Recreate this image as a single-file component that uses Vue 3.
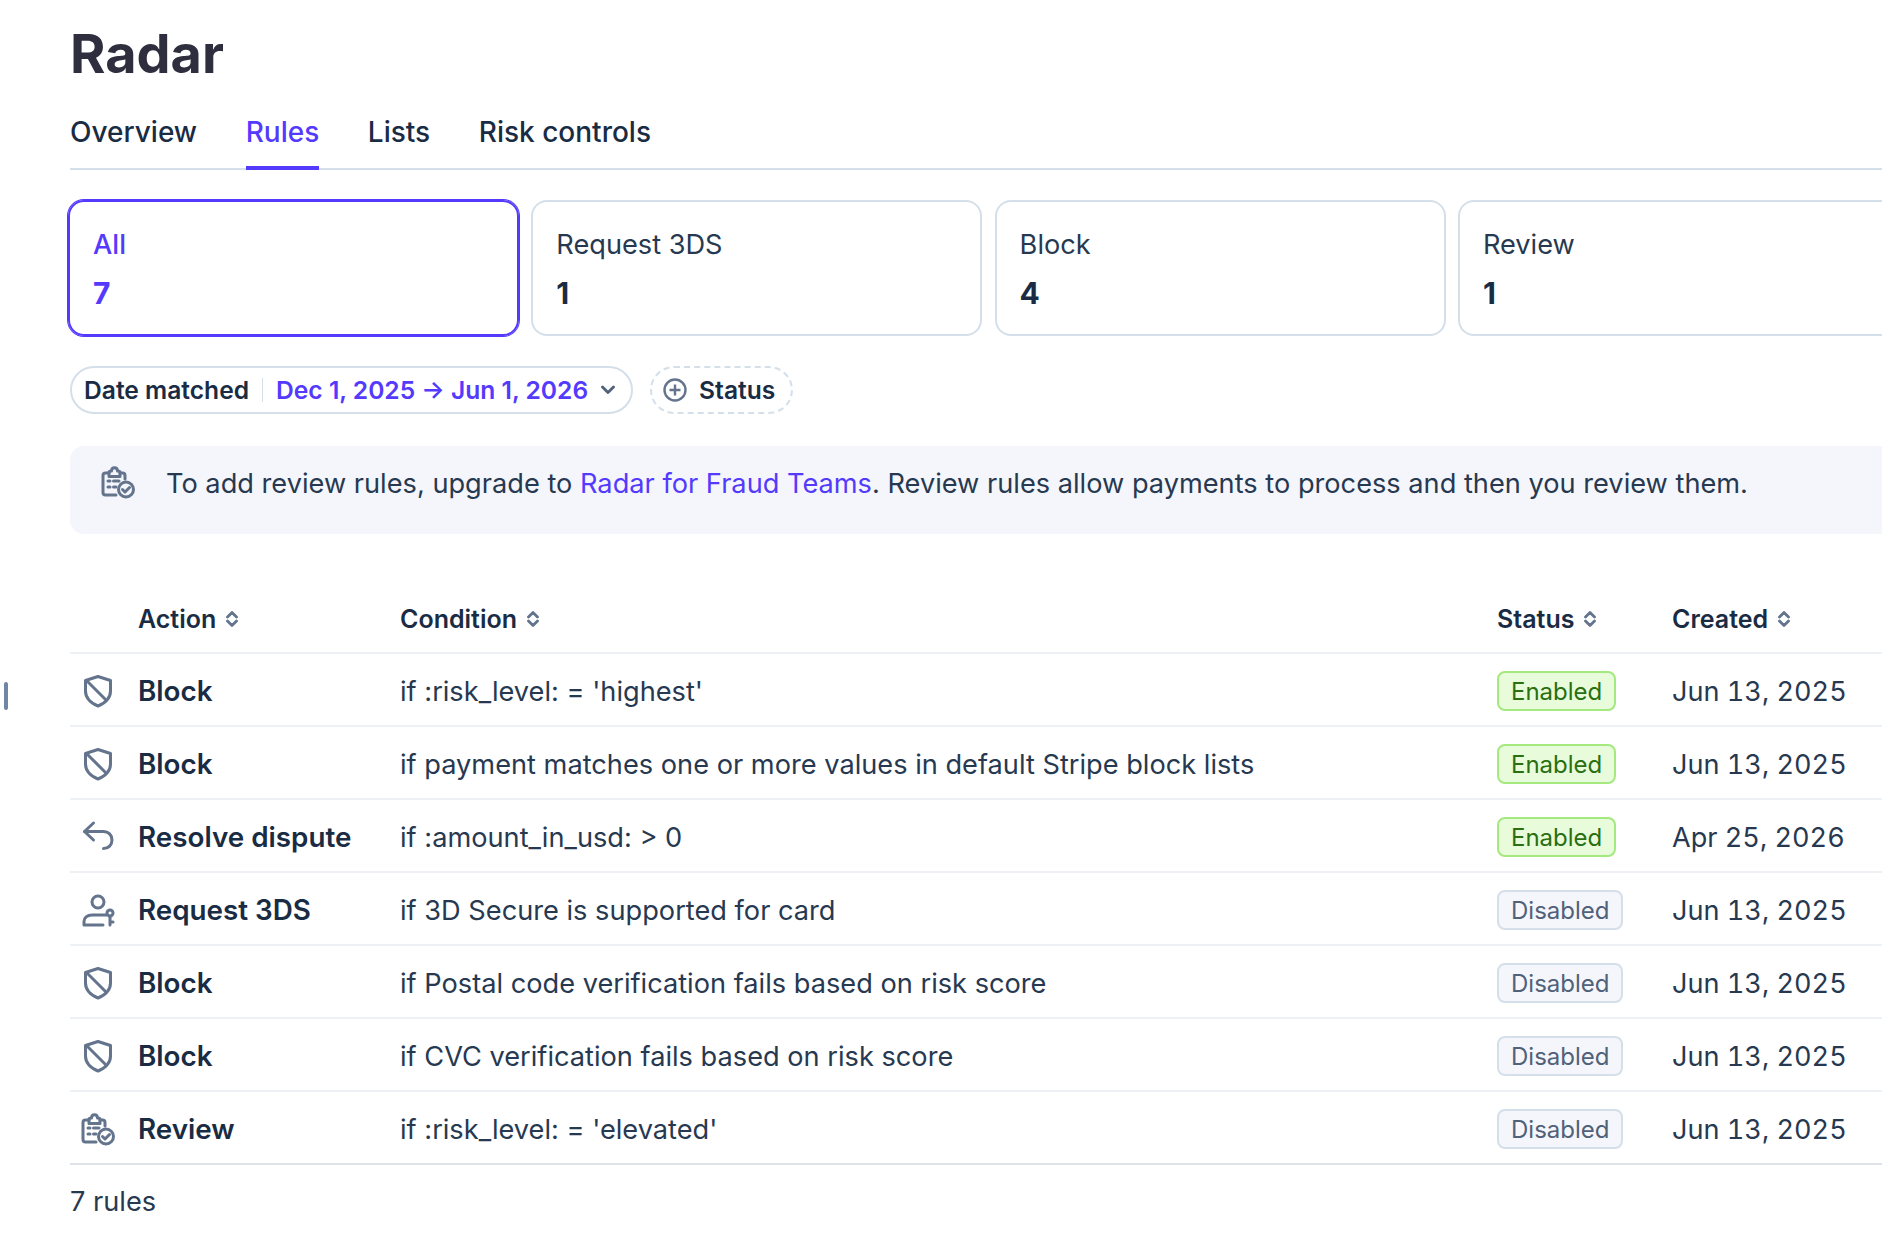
<template>
  <div class="page">
    <span class="edge-handle"></span>

    <h1>Radar</h1>

    <nav class="tabs">
      <a v-for="t in tabs" :key="t" class="tab" :class="{ active: t === 'Rules' }">{{ t }}</a>
    </nav>

    <div class="cards">
      <div v-for="(c, i) in cards" :key="c.label" class="card" :class="{ active: i === 0 }">
        <div class="card-label">{{ c.label }}</div>
        <div class="card-count">{{ c.count }}</div>
      </div>
    </div>

    <div class="filters">
      <div class="pill">
        <span class="pill-name">Date matched</span>
        <span class="pill-sep"></span>
        <span class="pill-value">Dec 1, 2025 → Jun 1, 2026</span>
        <svg class="chev" viewBox="0 0 14 10" width="14" height="10"><path d="M1.500 2 L7 7.600 L12.500 2" /></svg>
      </div>
      <div class="pill dashed">
        <svg class="plus" viewBox="0 0 24 24" width="24" height="24">
          <circle cx="12" cy="12" r="10.500" />
          <path d="M12 6.500 V17.500 M6.500 12 H17.500" />
        </svg>
        <span class="pill-name">Status</span>
      </div>
    </div>

    <div class="banner">
      <svg class="icon" viewBox="0 0 32 32" width="32" height="32">
        <path d="M14 29 H3.500 Q1 29 1 26.500 V9.500 Q1 7 3.500 7 H7 M18 7 H20.500 Q23 7 23 9.500 V13" />
        <path d="M7 10.500 H18 V6 Q18 5 15.500 5 C15.500 0.500 9.500 0.500 9.500 5 Q7 5 7 6 Z" />
        <path d="M6 15 H8 M11.500 15 H17 M6 21 H8 M11.500 21 H14" />
        <circle cx="24" cy="23.500" r="7.500" />
        <path d="M20.500 23.500 L23 26 L27.500 21.500" />
      </svg>
      <p>To add review rules, upgrade to <a>Radar for Fraud Teams</a>. Review rules allow payments to process and then you review them.</p>
    </div>

    <div class="table">
      <div class="row head">
        <div></div>
        <div v-for="h in headers" :key="h" class="th">
          {{ h }}
          <svg class="sort" viewBox="0 0 12 16" width="12" height="16"><path d="M1.500 6 L6 1.500 L10.500 6 M1.500 10 L6 14.500 L10.500 10" /></svg>
        </div>
      </div>

      <div v-for="(r, i) in rules" :key="i" class="row">
        <div class="cell-icon">
          <svg class="icon" viewBox="0 0 32 32" width="32" height="32">
            <template v-if="r.icon === 'shield'">
              <path d="M16 1.500 L28.500 5.500 V16 C28.500 24 22 28.500 16 31 C10 28.500 3.500 24 3.500 16 V5.500 Z" />
              <path d="M5 6 L24 25" />
            </template>
            <template v-else-if="r.icon === 'reply'">
              <path d="M11.500 2 L2.500 10.500 L11.500 19" />
              <path d="M2.500 10.500 H21.500 C26.500 10.500 30 14 30 19 C30 24 26.500 27.500 21.500 27.500" />
            </template>
            <template v-else-if="r.icon === 'key'">
              <circle cx="16" cy="8" r="6" />
              <path d="M24 21 H10 C5 21 2 24 2 27.500 V31 H21" />
              <circle cx="28" cy="19" r="3" />
              <path d="M28 22 V31 M28 28 H31" />
            </template>
            <template v-else>
              <path d="M14 29 H3.500 Q1 29 1 26.500 V9.500 Q1 7 3.500 7 H7 M18 7 H20.500 Q23 7 23 9.500 V13" />
              <path d="M7 10.500 H18 V6 Q18 5 15.500 5 C15.500 0.500 9.500 0.500 9.500 5 Q7 5 7 6 Z" />
              <path d="M6 15 H8 M11.500 15 H17 M6 21 H8 M11.500 21 H14" />
              <circle cx="24" cy="23.500" r="7.500" />
              <path d="M20.500 23.500 L23 26 L27.500 21.500" />
            </template>
          </svg>
        </div>
        <div class="cell-action">{{ r.action }}</div>
        <div>{{ r.condition }}</div>
        <div><span class="badge" :class="r.status.toLowerCase()">{{ r.status }}</span></div>
        <div class="num">{{ r.created }}</div>
      </div>
    </div>

    <p class="total">7 rules</p>
  </div>
</template>

<script setup>
const tabs = ['Overview', 'Rules', 'Lists', 'Risk controls']

const cards = [
  { label: 'All', count: 7 },
  { label: 'Request 3DS', count: 1 },
  { label: 'Block', count: 4 },
  { label: 'Review', count: 1 }
]

const headers = ['Action', 'Condition', 'Status', 'Created']

const rules = [
  { icon: 'shield', action: 'Block', condition: "if :risk_level: = 'highest'", status: 'Enabled', created: 'Jun 13, 2025' },
  { icon: 'shield', action: 'Block', condition: 'if payment matches one or more values in default Stripe block lists', status: 'Enabled', created: 'Jun 13, 2025' },
  { icon: 'reply', action: 'Resolve dispute', condition: 'if :amount_in_usd: > 0', status: 'Enabled', created: 'Apr 25, 2026' },
  { icon: 'key', action: 'Request 3DS', condition: 'if 3D Secure is supported for card', status: 'Disabled', created: 'Jun 13, 2025' },
  { icon: 'shield', action: 'Block', condition: 'if Postal code verification fails based on risk score', status: 'Disabled', created: 'Jun 13, 2025' },
  { icon: 'shield', action: 'Block', condition: 'if CVC verification fails based on risk score', status: 'Disabled', created: 'Jun 13, 2025' },
  { icon: 'clipboard', action: 'Review', condition: "if :risk_level: = 'elevated'", status: 'Disabled', created: 'Jun 13, 2025' }
]
</script>

<style>
body { background: #fff; overflow: hidden; }
</style>

<style scoped>
.page {
  position: relative;
  width: 1882px;
  height: 1240px;
  box-sizing: border-box;
  padding: 21px 0 0 70px;
  overflow: hidden;
  font-family: Inter, "Noto Sans", sans-serif;
  font-size: 27.2px;
  color: #273951;
  background: #fff;
}
.edge-handle {
  position: absolute;
  left: 4px;
  top: 682px;
  width: 4px;
  height: 28px;
  border-radius: 2px;
  background: #7186a5;
}
h1 {
  margin: 0;
  font-size: 54px;
  line-height: 66px;
  font-weight: 700;
  color: #2e2e3e;
}
.tabs {
  display: flex;
  gap: 48.600px;
  margin-top: 21px;
  height: 62px;
  box-sizing: border-box;
  border-bottom: 2px solid #d5dfe9;
}
.tab {
  height: 62px;
  box-sizing: border-box;
  padding-top: 7px;
  line-height: 34px;
  font-size: 28px;
  font-weight: 500;
  color: #1a2c44;
}
.tab.active {
  color: #533afd;
  border-bottom: 4px solid #533afd;
}
.cards {
  display: grid;
  grid-auto-flow: column;
  grid-auto-columns: 451px;
  gap: 12.300px;
  margin: 30px 0 0 -2px;
}
.card {
  height: 136px;
  box-sizing: border-box;
  padding: 25px 23px;
  border: 2px solid #d5dfe9;
  border-radius: 16px;
}
.card.active {
  border-color: #533afd;
  box-shadow: 0 0 0 1px #533afd;
}
.card-label {
  line-height: 36px;
}
.card-count {
  margin-top: 12px;
  font-size: 30px;
  line-height: 36px;
  font-weight: 700;
  color: #1a2c44;
}
.card.active .card-label,
.card.active .card-count { color: #533afd; }
.card.active .card-label { font-weight: 500; }

.filters {
  display: flex;
  gap: 17px;
  margin-top: 30px;
}
.pill {
  display: flex;
  align-items: center;
  height: 48px;
  box-sizing: border-box;
  padding: 0 16px 0 12px;
  border: 2px solid #d5dfe9;
  border-radius: 24px;
  font-size: 24.600px;
  font-weight: 600;
  color: #1a2c44;
}
.pill.dashed {
  border-style: dashed;
  padding: 0 16px 0 11px;
  gap: 12px;
}
.pill-sep {
  width: 1px;
  height: 24px;
  margin: 0 13px;
  background: #d5dfe9;
}
.pill-value {
  color: #533afd;
}
.chev {
  margin-left: 13px;
  fill: none;
  stroke: #50617a;
  stroke-width: 2.800;
  stroke-linecap: round;
  stroke-linejoin: round;
}
.plus {
  fill: none;
  stroke: #64748d;
  stroke-width: 2.400;
}
.banner {
  display: flex;
  align-items: flex-start;
  gap: 32px;
  margin-top: 32px;
  height: 88px;
  box-sizing: border-box;
  padding: 20px 32px;
  border-radius: 14px 0 0 14px;
  background: #f5f6fb;
}
.banner p {
  margin: -1px 0 0;
  line-height: 38px;
}
.banner a { color: #533afd; }
.icon {
  display: block;
  flex: none;
  overflow: visible;
  fill: none;
  stroke: #64748d;
  stroke-width: 3;
  stroke-linecap: round;
  stroke-linejoin: round;
}
.table {
  margin-top: 52px;
}
.row {
  display: grid;
  grid-template-columns: 68px 262px 1097px 175px 1fr;
  align-items: center;
  height: 73px;
  box-sizing: border-box;
  padding-top: 3px;
  border-bottom: 2px solid #edf0f5;
}
.row:last-child {
  border-bottom-color: #dfe3e8;
}
.row.head {
  height: 68px;
  padding-top: 0;
}
.th {
  display: flex;
  align-items: center;
  gap: 10px;
  font-size: 25px;
  font-weight: 600;
  color: #1a2c44;
}
.sort {
  fill: none;
  stroke: #64748d;
  stroke-width: 2.800;
  stroke-linecap: round;
  stroke-linejoin: round;
}
.cell-icon {
  padding-left: 12px;
}
.cell-action {
  font-size: 27.800px;
  font-weight: 600;
  color: #1a2c44;
}
.num {
  font-size: 27.100px;
  font-variant-numeric: tabular-nums;
}
.badge {
  display: inline-block;
  height: 40px;
  box-sizing: border-box;
  padding: 0 12px;
  border: 2px solid;
  border-radius: 8px;
  font-size: 24px;
  line-height: 38px;
  vertical-align: middle;
}
.badge.enabled {
  background: #e8fcdc;
  border-color: #a4e97d;
  color: #2a6f10;
}
.badge.disabled {
  background: #f5f6fb;
  border-color: #d5dfe9;
  color: #50617a;
}
.total {
  margin: 19px 0 0;
  line-height: 36px;
}
</style>
